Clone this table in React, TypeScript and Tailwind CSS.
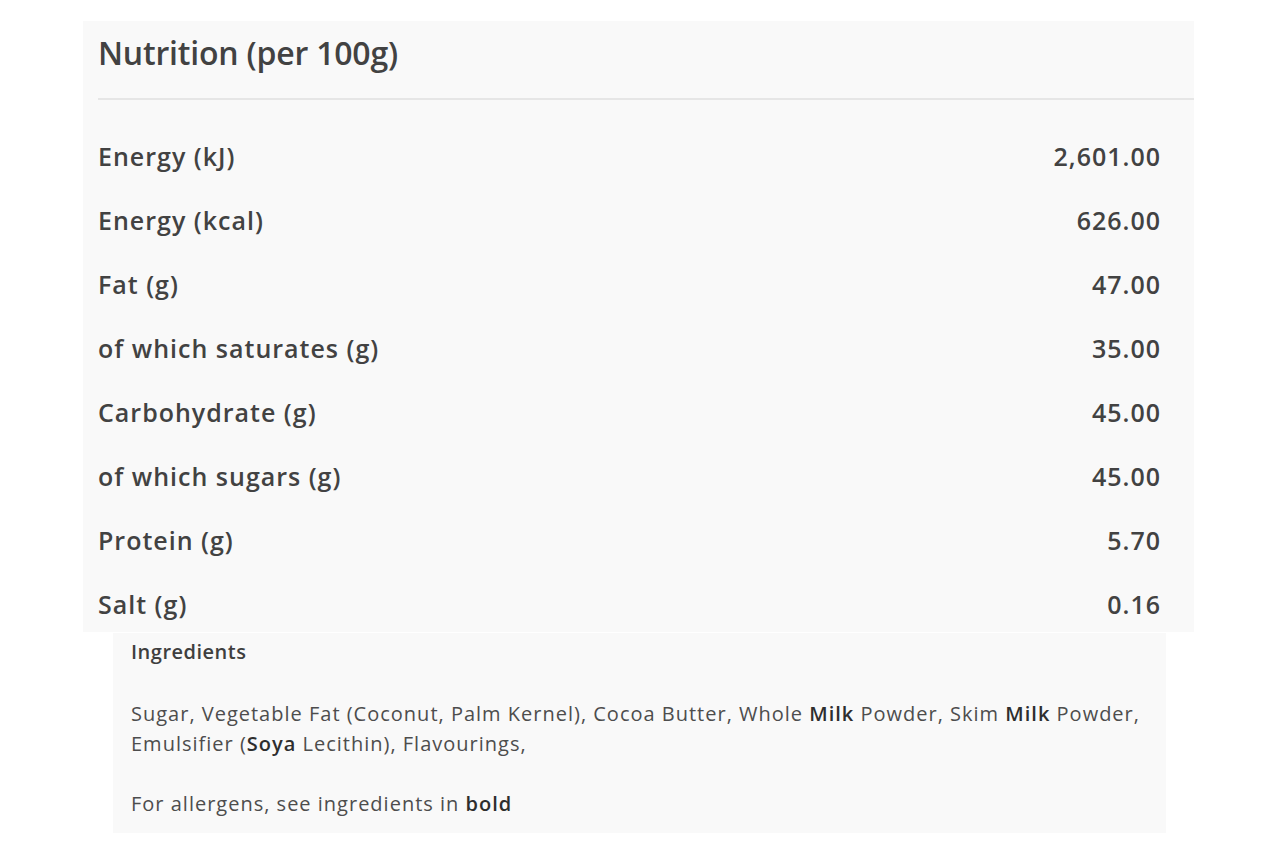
import React from "react";

const rows: [string, string][] = [
  ["Energy (kJ)", "2,601.00"],
  ["Energy (kcal)", "626.00"],
  ["Fat (g)", "47.00"],
  ["of which saturates (g)", "35.00"],
  ["Carbohydrate (g)", "45.00"],
  ["of which sugars (g)", "45.00"],
  ["Protein (g)", "5.70"],
  ["Salt (g)", "0.16"],
];

export default function App() {
  return (
    <div
      className="min-h-[853px] bg-white pl-[83px] pt-[21px] text-[#424242]"
      style={{ fontFamily: "'Open Sans', 'Noto Sans', sans-serif" }}
    >
      <div className="w-[1111px] h-[611px] bg-[#f9f9f9] overflow-hidden">
        <div className="ml-[15px] h-[79px] border-b-2 border-[#e6e6e6] flex items-center pb-[14px]">
          <h2 className="text-[32px] font-semibold leading-none tracking-[-0.2px]">Nutrition (per 100g)</h2>
        </div>
        <div className="pt-[25px] pl-[15px] pr-[34px]">
          {rows.map(([k, v]) => (
            <div
              key={k}
              className="h-[64px] flex items-center justify-between text-[25px] font-semibold tracking-[1px]"
            >
              <span>{k}</span>
              <span className="-mr-[1px]">{v}</span>
            </div>
          ))}
        </div>
      </div>
      <div className="ml-[30px] mt-px w-[1053px] h-[200px] bg-[#f9f9f9] pl-[18px] pt-[7px] text-[20px] tracking-[1px] text-[#4d4d4d]">
        <div className="font-semibold leading-[24px] text-[#3f3f3f] tracking-[0.5px]">Ingredients</div>
        <p className="mt-[35px] leading-[30px]">
          Sugar, Vegetable Fat (Coconut, Palm Kernel), Cocoa Butter, Whole{" "}
          <span className="font-semibold text-[#2e2e2e]">Milk</span> Powder, Skim{" "}
          <span className="font-semibold text-[#2e2e2e]">Milk</span> Powder,
          <br />
          Emulsifier (<span className="font-semibold text-[#2e2e2e]">Soya</span> Lecithin), Flavourings,
        </p>
        <p className="mt-[30px] leading-[30px]">
          For allergens, see ingredients in <span className="font-semibold text-[#2e2e2e]">bold</span>
        </p>
      </div>
    </div>
  );
}
